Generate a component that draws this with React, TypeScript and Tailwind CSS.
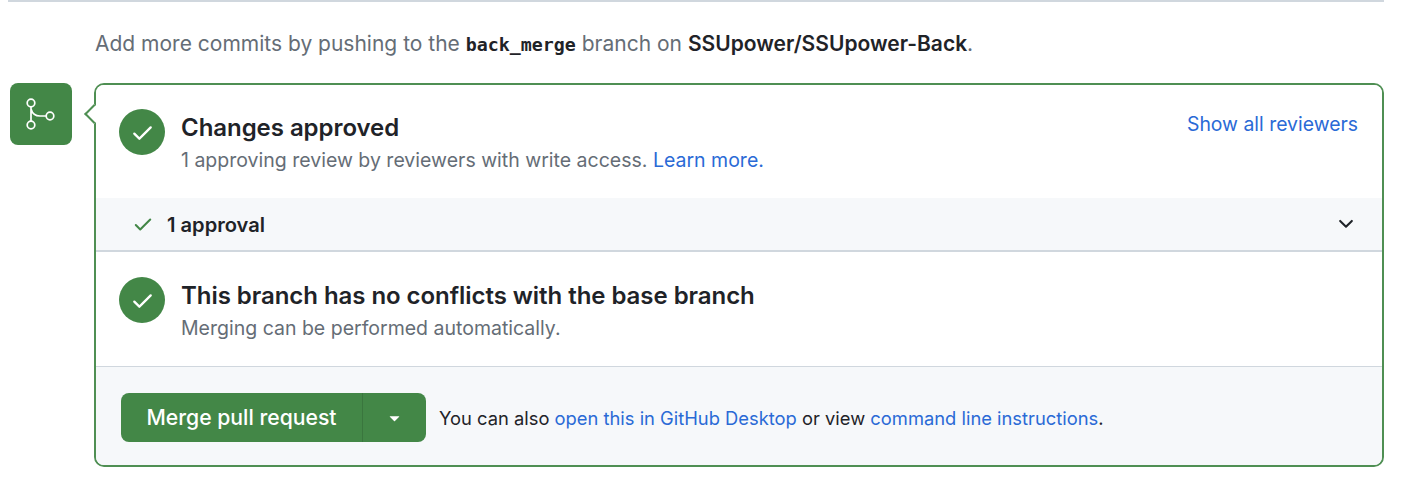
import type { ReactNode } from "react";

const checkPath =
  "M13.78 4.22a.75.75 0 0 1 0 1.06l-7.25 7.25a.75.75 0 0 1-1.06 0L2.22 9.28a.751.751 0 0 1 .018-1.042.751.751 0 0 1 1.042-.018L6 10.94l6.72-6.72a.75.75 0 0 1 1.06 0Z";
const chevronPath =
  "M12.78 5.22a.749.749 0 0 1 0 1.06l-4.25 4.25a.749.749 0 0 1-1.06 0L3.22 6.28a.749.749 0 1 1 1.06-1.06L8 8.939l3.72-3.719a.749.749 0 0 1 1.06 0Z";
const trianglePath =
  "m4.427 7.427 3.396 3.396a.25.25 0 0 0 .354 0l3.396-3.396A.25.25 0 0 0 11.396 7H4.604a.25.25 0 0 0-.177.427Z";

function Octicon({ d, className }: { d: string; className: string }) {
  return (
    <svg viewBox="0 0 16 16" fill="currentColor" className={className}>
      <path d={d} />
    </svg>
  );
}

function MergeIcon() {
  return (
    <svg viewBox="0 0 62 62" fill="none" stroke="currentColor" strokeWidth="1.7" className="h-[62px] w-[62px]">
      <circle cx="21" cy="20" r="3.8" />
      <circle cx="21" cy="42" r="3.8" />
      <circle cx="40" cy="33" r="3.8" />
      <path d="M21 23.8V38.2M21 26Q23 33 30 33H36.2" />
    </svg>
  );
}

function StatusRow({
  title,
  children,
  action,
  className,
}: {
  title: string;
  children: ReactNode;
  action?: ReactNode;
  className: string;
}) {
  return (
    <div className={`flex items-start bg-white pl-[23px] pr-[24px] ${className}`}>
      <div className="flex h-[46px] w-[46px] shrink-0 items-center justify-center rounded-full bg-[#438747] text-white">
        <Octicon d={checkPath} className="h-[25px] w-[25px]" />
      </div>
      <div className="ml-[16px] flex-1">
        <h3 className="mt-[1px] text-[24px] leading-[36px] font-semibold tracking-[-0.05px] text-[#1f2328]">{title}</h3>
        <p className="text-[19.5px] leading-[28px] text-[#656d76]">{children}</p>
      </div>
      {action}
    </div>
  );
}

export default function App() {
  return (
    <div className="h-[488px] w-[1408px] overflow-hidden bg-white font-['Inter',sans-serif]">
      <div className="ml-[8px] h-[2px] w-[1376px] bg-[#d0d7de]" />

      <p className="ml-[95px] mt-[28px] h-[53px] text-[21px] leading-[28px] text-[#656d76]">
        Add more commits by pushing to the{" "}
        <code className="font-['DejaVu_Sans_Mono',monospace] text-[18.3px] font-bold text-[#1f2328]">back_merge</code>{" "}
        branch on <span className="font-semibold text-[#1f2328]">SSUpower/SSUpower-Back</span>.
      </p>

      <div className="flex items-start pl-[10px]">
        <div className="flex h-[62px] w-[62px] shrink-0 items-center justify-center rounded-[8px] bg-[#438747] text-white">
          <MergeIcon />
        </div>

        <div className="relative ml-[22px] h-[384px] w-[1290px] rounded-[10px] border-2 border-[#4f8f53] bg-white">
          {/* caret */}
          <div className="absolute left-[-9px] top-[22px] h-[14px] w-[14px] rotate-45 border-b-2 border-l-2 border-[#4f8f53] bg-white" />

          <div className="relative h-full overflow-hidden rounded-[8px]">
            <StatusRow
              className="h-[113px] pt-[24px]"
              title="Changes approved"
              action={<a className="mt-[1px] text-[19.4px] leading-[28px] text-[#2a6ad6]">Show all reviewers</a>}
            >
              1 approving review by reviewers with write access.{" "}
              <a className="text-[#2a6ad6]">Learn more.</a>
            </StatusRow>

            <div className="flex h-[54px] items-center border-b-2 border-[#d0d7de] bg-[#f6f8fa] pl-[36px] pr-[25px]">
              <Octicon d={checkPath} className="h-[22px] w-[22px] text-[#438747]" />
              <span className="ml-[13px] mt-[2px] text-[20.1px] font-semibold text-[#1f2328]">1 approval</span>
              <Octicon d={chevronPath} className="ml-auto h-[22px] w-[22px] text-[#1f2328]" />
            </div>

            <StatusRow className="h-[114px] pt-[25px]" title="This branch has no conflicts with the base branch">
              Merging can be performed automatically.
            </StatusRow>

            <div className="flex h-[99px] items-center border-t border-[#d0d7de] bg-[#f6f8fa] pl-[25px] pt-[3px]">
              <div className="flex h-[49px] items-stretch overflow-hidden rounded-[8px] bg-[#438747] text-white">
                <span className="flex w-[242px] items-center justify-center border-r border-[#3a763e] text-[21.2px] font-medium">
                  Merge pull request
                </span>
                <span className="flex w-[63px] items-center justify-center">
                  <Octicon d={trianglePath} className="h-[21px] w-[21px]" />
                </span>
              </div>
              <p className="ml-[13px] mt-[2px] text-[18.35px] text-[#1f2328]">
                You can also <a className="text-[#2a6ad6]">open this in GitHub Desktop</a> or view{" "}
                <a className="text-[#2a6ad6]">command line instructions</a>.
              </p>
            </div>
          </div>
        </div>
      </div>
    </div>
  );
}
